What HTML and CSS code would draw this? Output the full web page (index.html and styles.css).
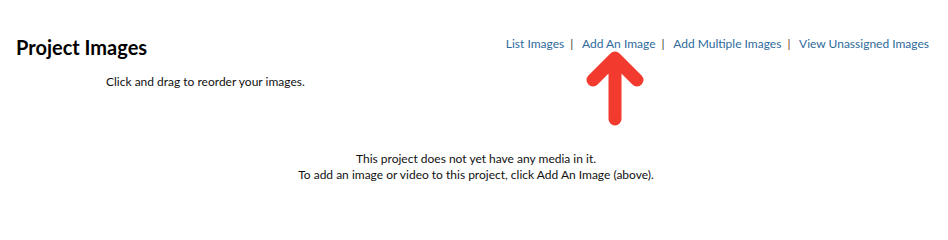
FILE: index.html
```html
<!DOCTYPE html>
<html>
<head>
<meta charset="utf-8">
<link rel="stylesheet" href="styles.css">
</head>
<body>
<div class="page">
  <div class="header">
    <h1 class="title">Project Images</h1>
    <nav class="links">
      <a href="#">List Images</a><span class="sep">|</span>
      <a href="#">Add An Image</a><span class="sep">|</span>
      <a href="#">Add Multiple Images</a><span class="sep sep-brown">|</span>
      <a href="#">View Unassigned Images</a>
    </nav>
  </div>
  <p class="hint">Click and drag to reorder your images.</p>
  <div class="empty">
    <p>This project does not yet have any media in it.</p>
    <p>To add an image or video to this project, click Add An Image (above).</p>
  </div>
  <svg class="arrow" width="70" height="80" viewBox="0 0 70 80">
    <path d="M35 9 L35 69 M13 30 L35 8 L57 30" fill="none" stroke="#f23a2f" stroke-width="13" stroke-linecap="round" stroke-linejoin="round"/>
  </svg>
</div>
</body>
</html>
```
FILE: styles.css
```css
html, body {
  margin: 0;
  padding: 0;
  background: #ffffff;
}
body {
  font-family: Lato, "Open Sans", sans-serif;
  color: #111111;
  font-size: 12px;
}
.page {
  position: relative;
  width: 948px;
  height: 200px;
}
.header {
  display: flex;
  justify-content: space-between;
  align-items: flex-start;
  padding: 36px 19px 0 16px;
}
.title {
  margin: 0;
  font-size: 20px;
  font-weight: 700;
  line-height: 22px;
  color: #000000;
}
.links {
  font-size: 12px;
  line-height: 16px;
}
.links a {
  color: #2e6a9c;
  text-decoration: none;
}
.sep {
  color: #3a3a30;
  margin: 0 6px 0 6px;
}
.sep-brown {
  color: #6e3512;
}
.hint {
  margin: 16px 0 0 106px;
  line-height: 16px;
}
.empty {
  margin-top: 61px;
  text-align: center;
  padding-left: 4px;
}
.empty p {
  margin: 0;
  line-height: 16px;
}
.arrow {
  position: absolute;
  left: 580px;
  top: 50px;
}
```
